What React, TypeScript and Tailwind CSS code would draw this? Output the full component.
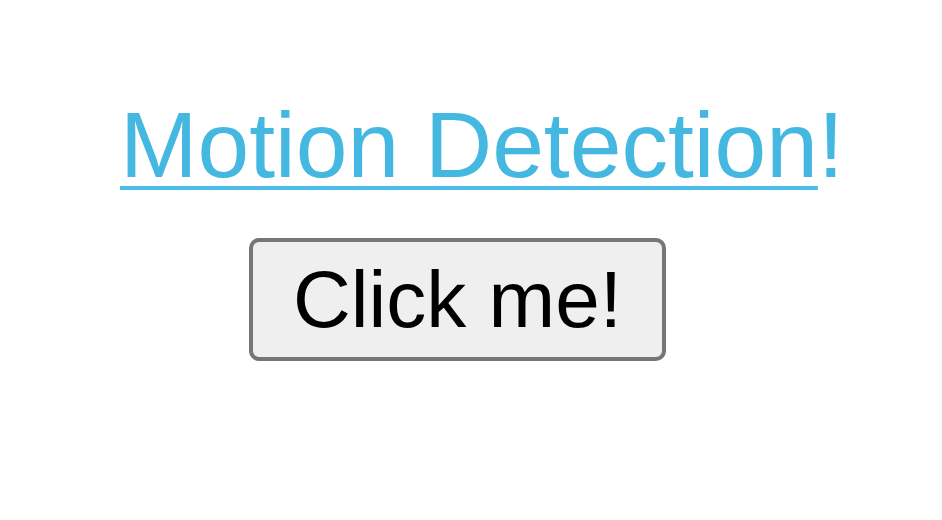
import React from "react";

export default function App() {
  return (
    <div className="w-[942px] h-[520px] bg-white pt-[99px] pl-[120px]" style={{ fontFamily: '"Liberation Sans", Arial, Helvetica, sans-serif' }}>
      <h1 className="text-[93px] leading-[93px] font-normal text-[#45b8e1] whitespace-nowrap">
        <a href="#" className="underline decoration-[4px] underline-offset-[9px] decoration-[#4cbfe9]">Motion Detection</a>!
      </h1>
      <button className="mt-[46px] ml-[129px] w-[417px] h-[123px] flex items-center justify-center bg-[#efefef] border-[4px] border-[#767676] rounded-[10px] text-black text-[80px] leading-[80px]">
        Click me!
      </button>
    </div>
  );
}
